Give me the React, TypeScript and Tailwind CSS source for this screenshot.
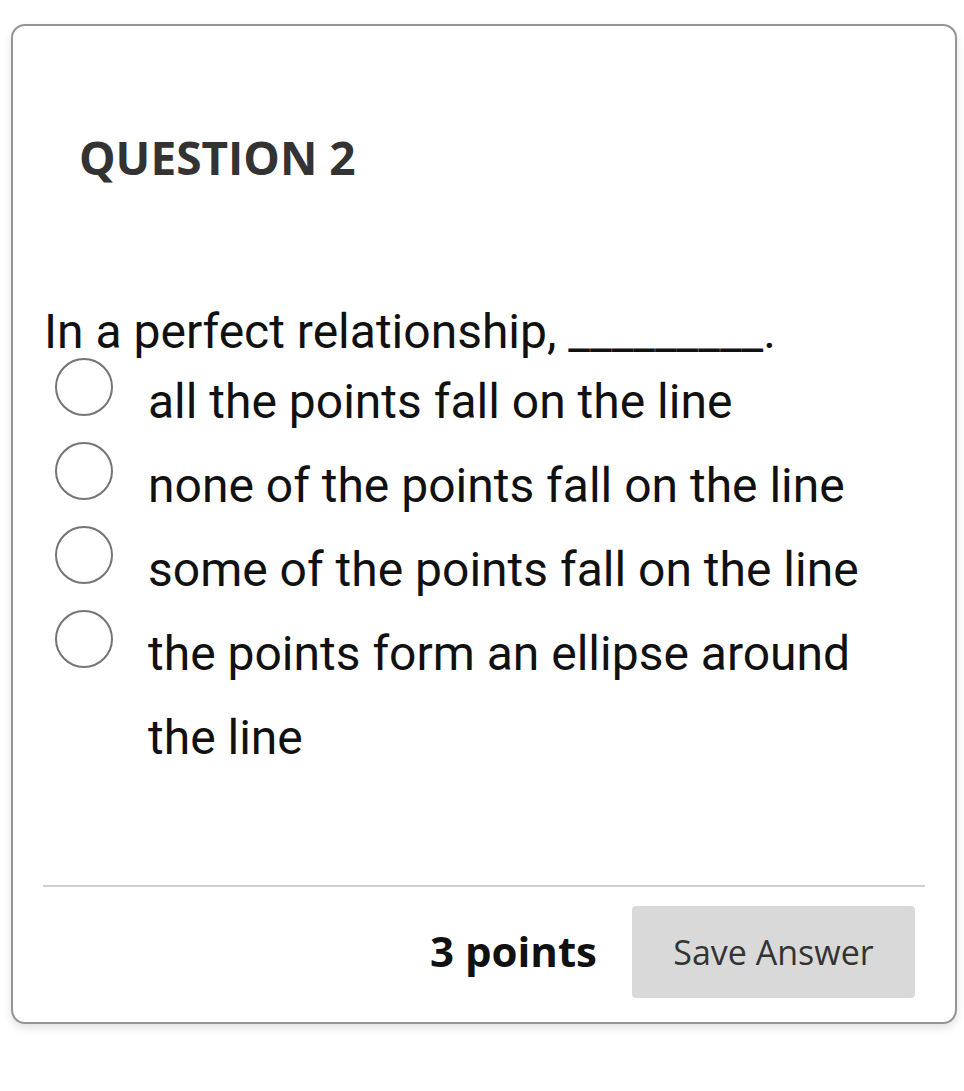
import React from 'react';

const options: string[] = [
  'all the points fall on the line',
  'none of the points fall on the line',
  'some of the points fall on the line',
  'the points form an ellipse around the line',
];

const App: React.FC = () => {
  return (
    <div className="min-h-[1091px] bg-white pl-[11px] pt-[24px] pr-[7px]">
      <div className="w-[946px] border-2 border-[#959595] rounded-[14px] bg-white shadow-[0_4px_8px_rgba(0,0,0,0.12)] pt-[101px] pb-[24px]">
        {/* Heading */}
        <h2 className="pl-[66px] text-[46px] leading-[60px] font-bold text-[#333] font-['Open_Sans',sans-serif]">
          QUESTION 2
        </h2>

        {/* Question */}
        <div className="mt-[117px] font-['Roboto',sans-serif] text-[#111]">
          <p className="pl-[31px] text-[48px] leading-[56px]">
            In a perfect relationship, _________.
          </p>

          <div className="flex flex-col">
            {options.map((opt, i) => (
              <label key={i} className="flex items-start pl-[42px] pr-[55px]">
                <span className="mt-[-2px] w-[58px] h-[58px] shrink-0 rounded-full border-2 border-[#757575] bg-white" />
                <span className="ml-[35px] text-[48px] leading-[84px]">{opt}</span>
              </label>
            ))}
          </div>
        </div>

        {/* Divider */}
        <div className="mt-[105px] mx-[30px] h-[2px] bg-[#cfcfcf]" />

        {/* Footer */}
        <div className="mt-[19px] flex items-center justify-end pr-[40px] font-['Open_Sans',sans-serif]">
          <span className="mt-[-4px] text-[42px] font-bold text-[#111]">3 points</span>
          <button className="ml-[35px] w-[283px] h-[92px] rounded-[4px] bg-[#d9d9d9] text-[34px] text-[#333]">
            Save Answer
          </button>
        </div>
      </div>
    </div>
  );
};

export default App;
